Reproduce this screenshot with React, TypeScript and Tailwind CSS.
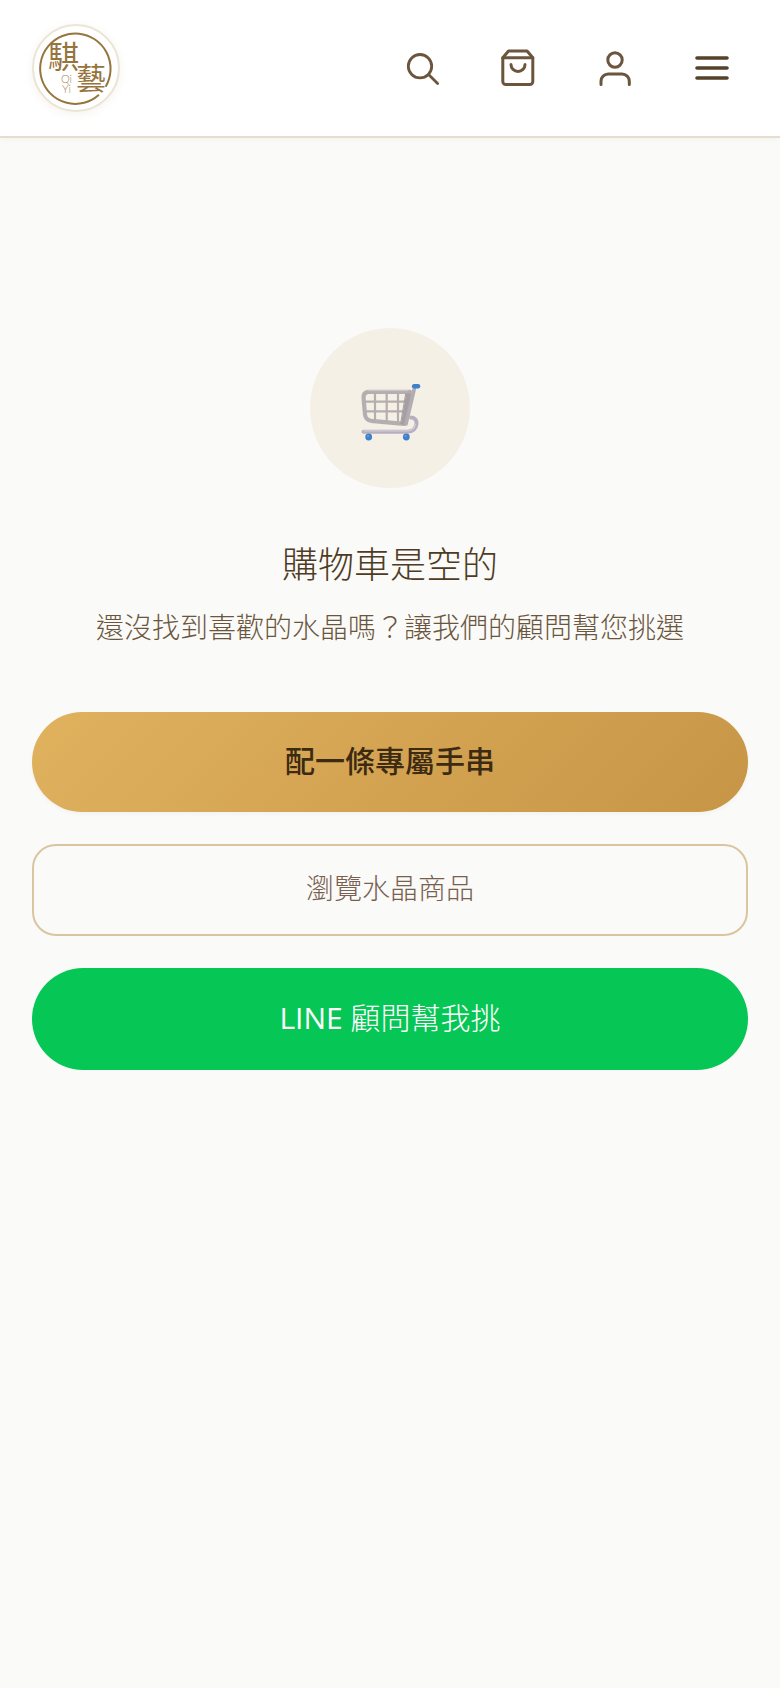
import type { ReactNode } from 'react';

const NAV_ITEMS: { label: string; icon: ReactNode }[] = [
  {
    label: '搜尋',
    icon: (
      <g stroke="#6b553c" strokeWidth="2.8">
        <circle cx="20" cy="22.2" r="11.7" />
        <path d="M28.8 30.8 37.6 39.4" />
      </g>
    ),
  },
  {
    label: '購物車',
    icon: (
      <g stroke="#6b553c" strokeWidth="3">
        <path d="M6.8 13.7 12.5 7h18.6l5.7 6.7v23.8a3 3 0 0 1-3 3h-24a3 3 0 0 1-3-3z" />
        <path d="M6.8 13.7h30" />
        <path d="M15 20.4a7 7 0 0 0 14 0" />
      </g>
    ),
  },
  {
    label: '會員',
    icon: (
      <g stroke="#6b553c" strokeWidth="3">
        <circle cx="23" cy="16" r="7.2" />
        <path d="M9 40.4v-3.2a7.2 7.2 0 0 1 7.2-7.2h13.9a7.2 7.2 0 0 1 7.2 7.2v3.2" />
      </g>
    ),
  },
  {
    label: '選單',
    icon: <path d="M9 14h30M9 24h30M9 34h30" stroke="#564229" strokeWidth="3.6" />,
  },
];

function Logo() {
  return (
    <a
      href="#"
      aria-label="騏藝 Qi Yi"
      className="block size-22 rounded-full border-2 border-[#ebe5d6] bg-white shadow-[0_2px_8px_rgba(139,105,56,0.08)]"
    >
      <svg viewBox="2 2 84 84" className="size-full" fill="none">
        <path
          d="M66.4 71.3A35.2 35.2 0 1 1 74 62"
          stroke="#97743c"
          strokeWidth="2"
          strokeLinecap="round"
        />
        <g fill="#97743c" className="font-['Noto_Sans_CJK_TC',sans-serif]">
          <text x="16" y="44" fontSize="31">騏</text>
          <text x="44" y="65" fontSize="30">藝</text>
        </g>
        <g fill="#9c8259" className="font-['Lato',sans-serif] font-light">
          <text x="29" y="59" fontSize="11">Qi</text>
          <text x="30" y="69" fontSize="11">Yi</text>
        </g>
      </svg>
    </a>
  );
}

function CartPicture() {
  return (
    <svg viewBox="0 0 64 64" className="size-16 overflow-visible" fill="none" strokeLinecap="round" strokeLinejoin="round">
      {/* basket grid */}
      <path d="M17 16v29M28.7 16v31M40 16v32M6 25.7h43M6 35.3h41" stroke="#b5adae" strokeWidth="2.2" />
      {/* frame */}
      <path d="M10 15.8h42l-6 32-33-3q-5-1-6-6L5.6 22q-.4-5.5 4.4-6.2z" stroke="#b5aeb1" strokeWidth="4.2" />
      <path d="M10 14.6h40" stroke="#cdc7ca" strokeWidth="1" />
      <path d="M48 18h4.5L47 49l-4-1.5z" fill="#a69fa2" stroke="#a69fa2" />
      {/* handle and lower rail */}
      <path d="M56.5 12 48 48" stroke="#b3acb2" strokeWidth="3.6" />
      <path d="M53 41.5c4 0 6 3 5.500 6.500-.8 5-4 7.700-9 7.700H5.500" stroke="#b8aebf" strokeWidth="4" />
      <path d="M6 54.800h43.500c4 0 7-2.500 8-6.500" stroke="#d3cbda" strokeWidth="1.200" />
      <path d="M56.200 10.200h3.800" stroke="#407fca" strokeWidth="4.600" />
      <circle cx="10.700" cy="61" r="3.400" fill="#407fca" />
      <circle cx="48.300" cy="61" r="3.400" fill="#407fca" />
      <circle cx="10" cy="60" r="1" fill="#6aa3df" />
      <circle cx="47.500" cy="60" r="1" fill="#6aa3df" />
    </svg>
  );
}

export default function App() {
  return (
    <div className="min-h-screen bg-[#fafaf8] font-['Open_Sans','Noto_Sans_CJK_TC',sans-serif]">
      <header className="flex items-center justify-between border-b-2 border-[#eadccd] bg-white py-6 pr-6 pl-8 shadow-[0_2px_8px_rgba(0,0,0,0.03)]">
        <Logo />
        <nav className="flex gap-2">
          {NAV_ITEMS.map((item) => (
            <button
              key={item.label}
              type="button"
              aria-label={item.label}
              className="flex size-22 items-center justify-center"
            >
              <svg viewBox="0 0 48 48" className="size-12" fill="none" strokeLinecap="round" strokeLinejoin="round">
                {item.icon}
              </svg>
            </button>
          ))}
        </nav>
      </header>

      <main className="flex flex-col items-center px-8 pt-[190px] text-center">
        <div className="flex size-40 items-center justify-center rounded-full bg-[#f5f0e6]">
          <CartPicture />
        </div>
        <h1 className="mt-12 text-[36px] leading-[58px] font-light text-[#4f3b24]">購物車是空的</h1>
        <p className="mt-2 text-[28px] leading-[50px] font-light text-[#6b563d]">
          還沒找到喜歡的水晶嗎？讓我們的顧問幫您挑選
        </p>

        <div className="mt-15 flex w-full flex-col gap-8">
          <button
            type="button"
            className="h-25 rounded-full bg-linear-135 from-[#e0b25e] to-[#c79546] pb-1 text-[30px] font-medium text-[#3c2a12] shadow-[0_2px_4px_rgba(0,0,0,0.04)]"
          >
            配一條專屬手串
          </button>
          <button
            type="button"
            className="h-23 rounded-3xl border-2 border-[#d9c5a0] pb-1 text-[28px] font-light text-[#785f50]"
          >
            瀏覽水晶商品
          </button>
          <button type="button" className="h-[102px] rounded-full bg-[#06c755] pb-1 text-[30px] font-light text-white">
            <span className="font-normal">LINE</span> 顧問幫我挑
          </button>
        </div>
      </main>
    </div>
  );
}
